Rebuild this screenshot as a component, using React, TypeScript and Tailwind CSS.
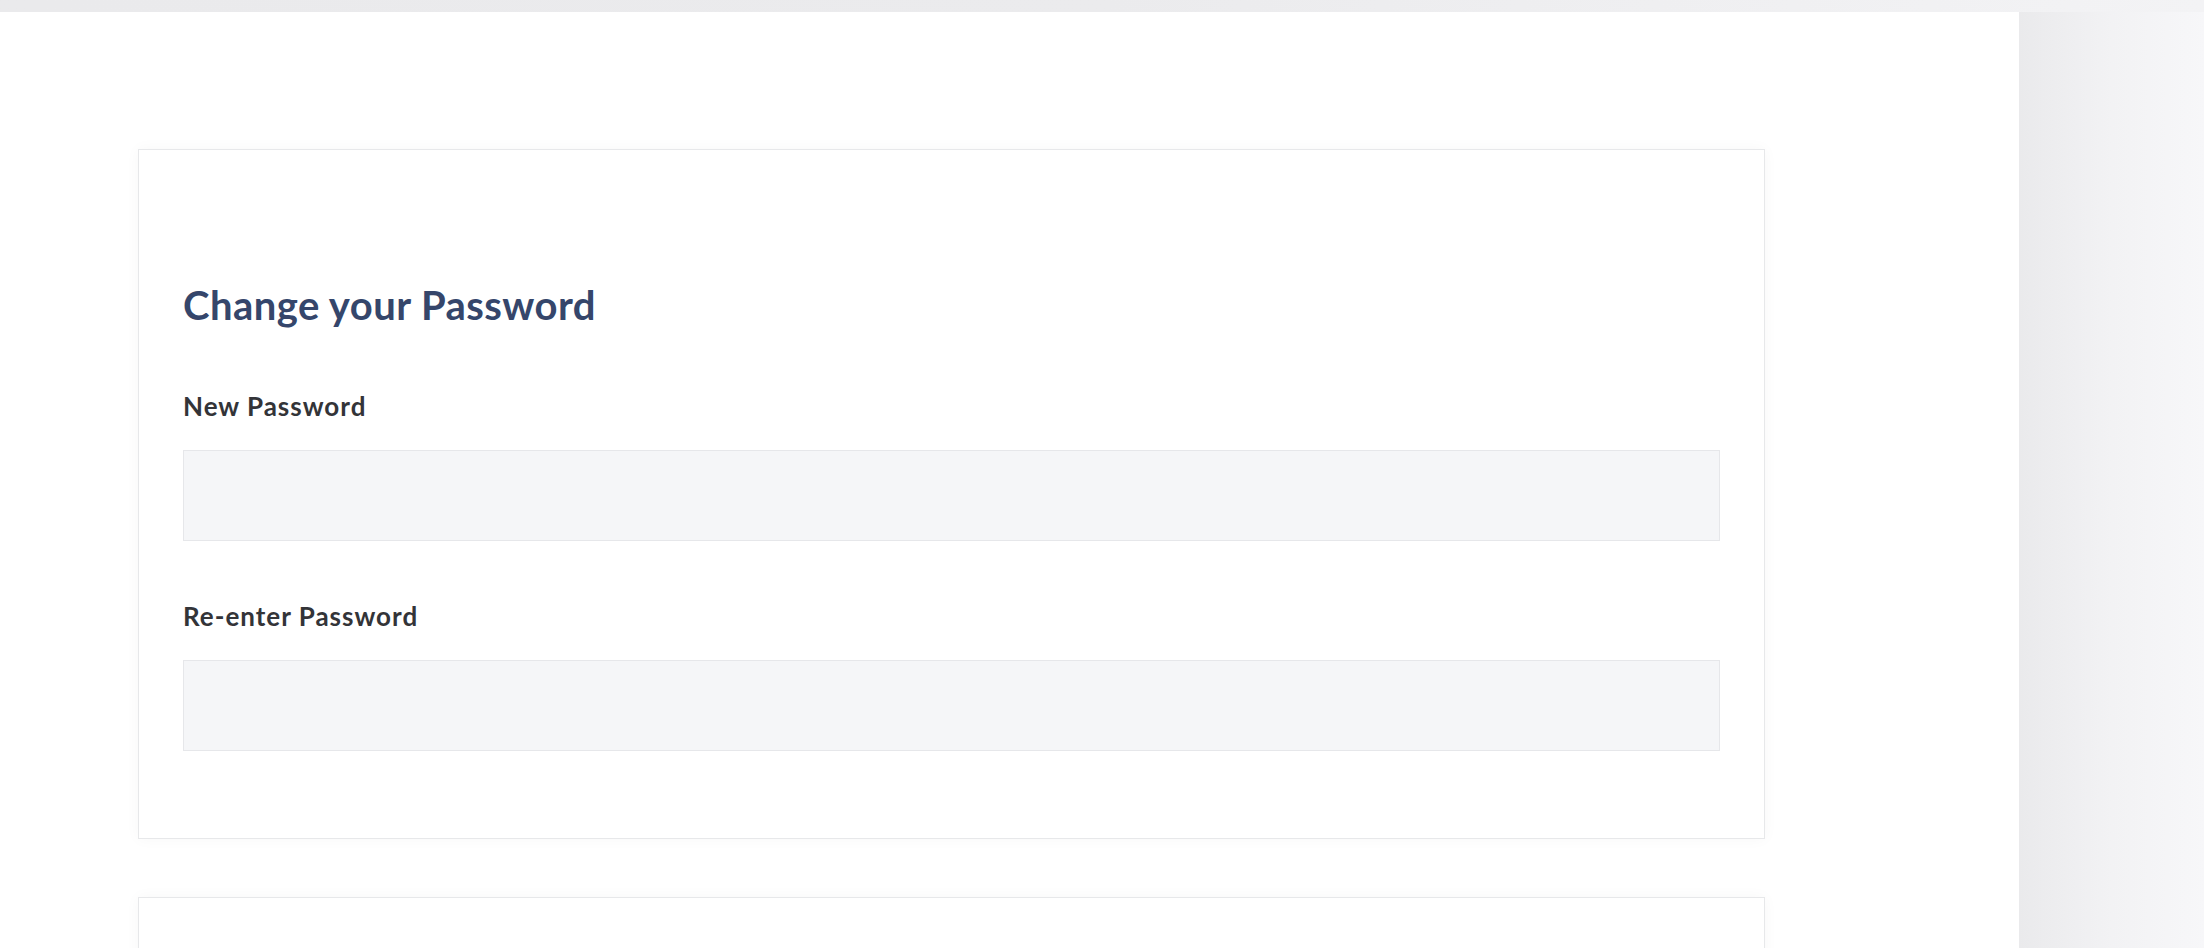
import React from "react";

export default function App() {
  return (
    <div className="h-[948px] overflow-hidden bg-[#ececee] flex flex-col font-['Lato',sans-serif]">
      {/* top strip */}
      <div className="h-[12px] shrink-0 bg-gradient-to-r from-[#eaeaec] via-[#ebebed] to-[#f3f3f5]" />

      <div className="flex flex-1 min-h-0">
        {/* main content */}
        <main className="w-[2019px] shrink-0 bg-white pl-[138px] pt-[137px] flex flex-col gap-[58px]">
          <section className="w-[1627px] h-[690px] shrink-0 bg-white border border-[#e7e8ea] shadow-[0_0_14px_rgba(0,0,0,0.035)] px-[44px] pt-[131px]">
            <h2 className="text-[40px] leading-[48px] font-bold tracking-[0.45px] text-[#35466b]">Change your Password</h2>

            <label className="block mt-[61px] text-[26px] leading-[32px] font-bold tracking-[1px] text-[#333438]">New Password</label>
            <input
              type="password"
              className="block mt-[28px] w-full h-[91px] bg-[#f5f6f8] border border-[#e6e7ea] outline-none px-5 text-[24px]"
            />

            <label className="block mt-[59px] text-[26px] leading-[32px] font-bold tracking-[1px] text-[#333438]">Re-enter Password</label>
            <input
              type="password"
              className="block mt-[28px] w-full h-[91px] bg-[#f5f6f8] border border-[#e6e7ea] outline-none px-5 text-[24px]"
            />
          </section>

          <section className="w-[1627px] h-[300px] shrink-0 bg-white border border-[#e7e8ea] shadow-[0_0_14px_rgba(0,0,0,0.035)]" />
        </main>

        {/* right gutter */}
        <aside className="flex-1 bg-gradient-to-r from-[#eaeaec] via-[#f2f2f4] to-[#f7f7f9]" />
      </div>
    </div>
  );
}
